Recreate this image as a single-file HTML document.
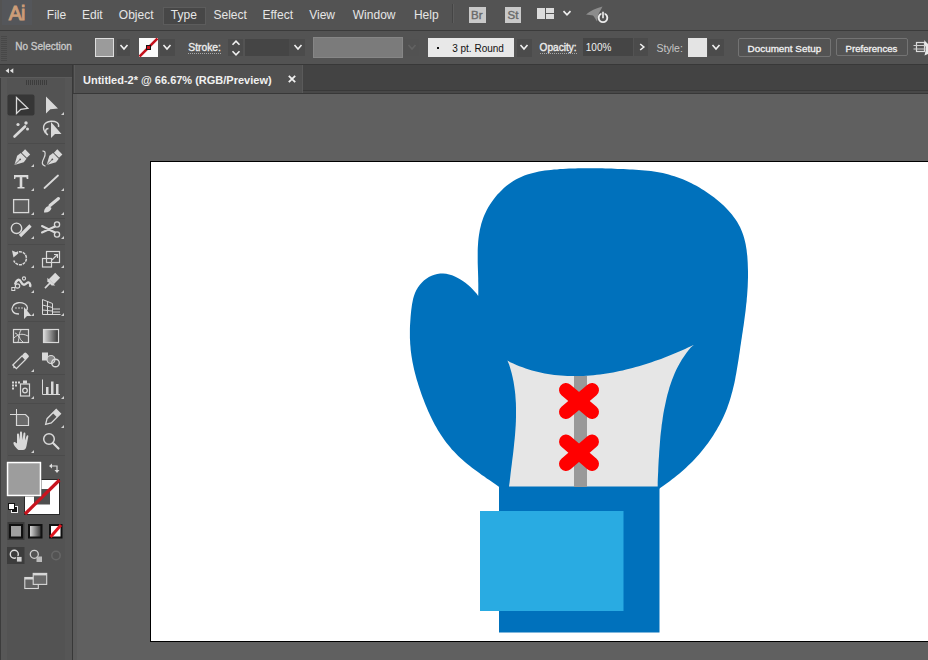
<!DOCTYPE html>
<html><head><meta charset="utf-8"><style>
html,body{margin:0;padding:0;}
body{width:928px;height:660px;overflow:hidden;position:relative;background:#535353;font-family:"Liberation Sans", sans-serif;}
.b{position:absolute;}
.t{position:absolute;white-space:pre;}
</style></head><body>
<div class="b" style="left:0px;top:0px;width:928px;height:30px;background:#535353;"></div><div class="b" style="left:0px;top:30px;width:928px;height:1px;background:#3b3b3b;"></div><div class="b" style="left:2px;top:0px;width:30px;height:25px;background:#54565a;"></div><div class="t" style="left:8.8px;top:4.29px;font-size:19.5px;line-height:19.5px;height:19.5px;color:#cc9d78;font-weight:400;letter-spacing:-0.8px;-webkit-text-stroke:0.9px #cc9d78;">Ai</div><div class="b" style="left:163px;top:7px;width:43px;height:17.5px;background:#474747;border:1px solid #5c5c5c;box-sizing:border-box;"></div><div class="t" style="left:46.800000000000004px;top:8.84px;font-size:12px;line-height:12px;height:12px;color:#e6e6e6;font-weight:400;">File</div><div class="t" style="left:82.0px;top:8.84px;font-size:12px;line-height:12px;height:12px;color:#e6e6e6;font-weight:400;">Edit</div><div class="t" style="left:118.8px;top:8.84px;font-size:12px;line-height:12px;height:12px;color:#e6e6e6;font-weight:400;">Object</div><div class="t" style="left:170.79999999999998px;top:8.84px;font-size:12px;line-height:12px;height:12px;color:#e6e6e6;font-weight:400;">Type</div><div class="t" style="left:213.5px;top:8.84px;font-size:12px;line-height:12px;height:12px;color:#e6e6e6;font-weight:400;">Select</div><div class="t" style="left:262.5px;top:8.84px;font-size:12px;line-height:12px;height:12px;color:#e6e6e6;font-weight:400;">Effect</div><div class="t" style="left:309.2px;top:8.84px;font-size:12px;line-height:12px;height:12px;color:#e6e6e6;font-weight:400;">View</div><div class="t" style="left:352.8px;top:8.84px;font-size:12px;line-height:12px;height:12px;color:#e6e6e6;font-weight:400;">Window</div><div class="t" style="left:413.9px;top:8.84px;font-size:12px;line-height:12px;height:12px;color:#e6e6e6;font-weight:400;">Help</div><div class="b" style="left:452px;top:4px;width:1px;height:19px;background:#454545;"></div><div class="b" style="left:453px;top:4px;width:1px;height:19px;background:#5d5d5d;"></div><div class="b" style="left:468.5px;top:7px;width:17px;height:16px;background:#c9c9c9;"></div><div class="t" style="left:471px;top:10.07px;font-size:11.5px;line-height:11.5px;height:11.5px;color:#6a6a6a;font-weight:400;-webkit-text-stroke:0.4px #6a6a6a;">Br</div><div class="b" style="left:504.5px;top:7px;width:16.5px;height:16px;background:#c9c9c9;"></div><div class="t" style="left:507.5px;top:10.07px;font-size:11.5px;line-height:11.5px;height:11.5px;color:#6a6a6a;font-weight:400;-webkit-text-stroke:0.4px #6a6a6a;">St</div><div class="b" style="left:536.5px;top:8px;width:8.5px;height:11px;background:#dcdcdc;"></div><div class="b" style="left:546px;top:8px;width:8.3px;height:4.5px;background:#dcdcdc;"></div><div class="b" style="left:546px;top:13.5px;width:8.3px;height:5.5px;background:#dcdcdc;"></div><svg class="b" style="left:560.8px;top:7.199999999999999px" width="12" height="12" viewBox="-6 -6 12 12"><path d="M-3.5 -1.9 L0 1.9 L3.5 -1.9" transform="rotate(0)" fill="none" stroke="#f0f0f0" stroke-width="1.6"/></svg><svg class="b" style="left:580px;top:0px" width="32" height="30" viewBox="580 0 32 30"><path d="M586 14.5 C590 11 596 8 602.5 6.5 C601 10 599.5 12 598.5 14 L597 21.5 C595.5 19 594.5 17 593 15.5 C591 15 588 15 586 14.5 Z" fill="#8c8c8c"/><circle cx="603" cy="17.8" r="4.3" fill="none" stroke="#ececec" stroke-width="1.9"/><line x1="603" y1="11.3" x2="603" y2="18.3" stroke="#535353" stroke-width="3.2"/><line x1="603" y1="11.8" x2="603" y2="18.3" stroke="#f0f0f0" stroke-width="1.6"/></svg><div class="b" style="left:0px;top:31px;width:928px;height:33px;background:#535353;"></div><div class="b" style="left:0px;top:64px;width:928px;height:1px;background:#383838;"></div><div class="b" style="left:1px;top:36px;width:6px;height:1px;background:#484848;"></div><div class="b" style="left:1px;top:38px;width:6px;height:1px;background:#484848;"></div><div class="b" style="left:1px;top:40px;width:6px;height:1px;background:#484848;"></div><div class="b" style="left:1px;top:42px;width:6px;height:1px;background:#484848;"></div><div class="b" style="left:1px;top:44px;width:6px;height:1px;background:#484848;"></div><div class="b" style="left:1px;top:46px;width:6px;height:1px;background:#484848;"></div><div class="b" style="left:1px;top:48px;width:6px;height:1px;background:#484848;"></div><div class="b" style="left:1px;top:50px;width:6px;height:1px;background:#484848;"></div><div class="b" style="left:1px;top:52px;width:6px;height:1px;background:#484848;"></div><div class="b" style="left:1px;top:54px;width:6px;height:1px;background:#484848;"></div><div class="b" style="left:1px;top:56px;width:6px;height:1px;background:#484848;"></div><div class="b" style="left:1px;top:58px;width:6px;height:1px;background:#484848;"></div><div class="b" style="left:1px;top:60px;width:6px;height:1px;background:#484848;"></div><div class="t" style="left:15.2px;top:42.03px;font-size:10px;line-height:10px;height:10px;color:#cacaca;font-weight:400;-webkit-text-stroke:0.3px #cacaca;">No Selection</div><div class="b" style="left:95px;top:38px;width:19px;height:19px;background:#9b9b9b;border:1px solid #dedede;box-sizing:border-box;"></div><div class="b" style="left:117px;top:39px;width:13px;height:17px;background:#4b4b4b;"></div><svg class="b" style="left:117.5px;top:40.5px" width="12" height="12" viewBox="-6 -6 12 12"><path d="M-3.5 -2.0 L0 2.0 L3.5 -2.0" transform="rotate(0)" fill="none" stroke="#f0f0f0" stroke-width="1.6"/></svg><svg class="b" style="left:139px;top:38px" width="19" height="19" viewBox="0 0 19 19"><rect width="19" height="19" fill="#fafafa"/><line x1="0.5" y1="18.5" x2="18.5" y2="0.5" stroke="#c4111c" stroke-width="2.6"/><rect x="7.5" y="7.5" width="4" height="4" fill="#d0101a" stroke="#111" stroke-width="1"/></svg><div class="b" style="left:160px;top:39px;width:15px;height:17px;background:#4b4b4b;"></div><svg class="b" style="left:161.3px;top:40.5px" width="12" height="12" viewBox="-6 -6 12 12"><path d="M-3.5 -2.0 L0 2.0 L3.5 -2.0" transform="rotate(0)" fill="none" stroke="#f0f0f0" stroke-width="1.6"/></svg><div class="t" style="left:188.3px;top:42.78px;font-size:10.3px;line-height:10.3px;height:10.3px;color:#ececec;font-weight:400;-webkit-text-stroke:0.35px #ececec;">Stroke:</div><div class="b" style="left:188px;top:53px;width:33px;height:1px;background:transparent;border-top:1px dotted #a8a8a8;box-sizing:border-box;"></div><div class="b" style="left:228px;top:39px;width:15px;height:17px;background:#4b4b4b;"></div><svg class="b" style="left:229.5px;top:36.8px" width="12" height="12" viewBox="-6 -6 12 12"><path d="M-3.5 -1.75 L0 1.75 L3.5 -1.75" transform="rotate(180)" fill="none" stroke="#f0f0f0" stroke-width="1.6"/></svg><svg class="b" style="left:229.5px;top:46.6px" width="12" height="12" viewBox="-6 -6 12 12"><path d="M-3.5 -1.75 L0 1.75 L3.5 -1.75" transform="rotate(0)" fill="none" stroke="#f0f0f0" stroke-width="1.6"/></svg><div class="b" style="left:245px;top:39px;width:44px;height:17px;background:#454545;"></div><div class="b" style="left:289px;top:39px;width:16px;height:17px;background:#4b4b4b;"></div><svg class="b" style="left:291.6px;top:40.8px" width="12" height="12" viewBox="-6 -6 12 12"><path d="M-3.5 -2.0 L0 2.0 L3.5 -2.0" transform="rotate(0)" fill="none" stroke="#f0f0f0" stroke-width="1.6"/></svg><div class="b" style="left:313px;top:37px;width:90px;height:21px;background:#7b7b7b;border:1px solid #868686;box-sizing:border-box;"></div><div class="b" style="left:404px;top:39px;width:15px;height:17px;background:#525252;"></div><svg class="b" style="left:405.5px;top:40.8px" width="12" height="12" viewBox="-6 -6 12 12"><path d="M-3.5 -2.0 L0 2.0 L3.5 -2.0" transform="rotate(0)" fill="none" stroke="#626262" stroke-width="1.6"/></svg><div class="b" style="left:428px;top:38px;width:86px;height:19px;background:#e8e8e8;"></div><div class="b" style="left:437px;top:47px;width:2px;height:2px;background:#111;"></div><div class="t" style="left:452.2px;top:43.53px;font-size:10px;line-height:10px;height:10px;color:#111;font-weight:400;">3 pt. Round</div><div class="b" style="left:517px;top:39px;width:15px;height:18px;background:#4b4b4b;"></div><svg class="b" style="left:518px;top:40.8px" width="12" height="12" viewBox="-6 -6 12 12"><path d="M-3.5 -2.0 L0 2.0 L3.5 -2.0" transform="rotate(0)" fill="none" stroke="#f0f0f0" stroke-width="1.6"/></svg><div class="t" style="left:539.6px;top:42.95px;font-size:10.1px;line-height:10.1px;height:10.1px;color:#ececec;font-weight:400;-webkit-text-stroke:0.35px #ececec;">Opacity:</div><div class="b" style="left:540px;top:53px;width:37px;height:1px;background:transparent;border-top:1px dotted #a8a8a8;box-sizing:border-box;"></div><div class="b" style="left:583px;top:38px;width:50px;height:18px;background:#454545;"></div><div class="t" style="left:585.8px;top:42.53px;font-size:10px;line-height:10px;height:10px;color:#f0f0f0;font-weight:400;">100%</div><div class="b" style="left:634px;top:38px;width:14px;height:18px;background:#4b4b4b;"></div><svg class="b" style="left:635.6px;top:40.5px" width="12" height="12" viewBox="-6 -6 12 12"><path d="M-3.0 -1.8 L0 1.8 L3.0 -1.8" transform="rotate(-90)" fill="none" stroke="#f0f0f0" stroke-width="1.6"/></svg><div class="t" style="left:656.6px;top:43.11px;font-size:10.5px;line-height:10.5px;height:10.5px;color:#c6c6c6;font-weight:400;">Style:</div><div class="b" style="left:688px;top:38px;width:19px;height:19px;background:#e4e4e4;"></div><div class="b" style="left:708px;top:39px;width:16px;height:17px;background:#4b4b4b;"></div><svg class="b" style="left:710px;top:40.8px" width="12" height="12" viewBox="-6 -6 12 12"><path d="M-3.5 -2.0 L0 2.0 L3.5 -2.0" transform="rotate(0)" fill="none" stroke="#f0f0f0" stroke-width="1.6"/></svg><div class="b" style="left:738px;top:38px;width:93px;height:19px;background:#535353;border:1px solid #737373;border-radius:2px;box-sizing:border-box;"></div><div class="t" style="left:747.6px;top:43.62px;font-size:9.9px;line-height:9.9px;height:9.9px;color:#f2f2f2;font-weight:400;-webkit-text-stroke:0.3px #f2f2f2;">Document Setup</div><div class="b" style="left:836px;top:38px;width:72px;height:18px;background:#535353;border:1px solid #737373;border-radius:2px;box-sizing:border-box;"></div><div class="t" style="left:845.6px;top:43.67px;font-size:9.6px;line-height:9.6px;height:9.6px;color:#f2f2f2;font-weight:400;-webkit-text-stroke:0.3px #f2f2f2;">Preferences</div><svg class="b" style="left:910px;top:36px" width="18" height="24" viewBox="910 36 18 24"><rect x="916.5" y="42.5" width="8" height="9" fill="none" stroke="#dcdcdc" stroke-width="1.2"/><path d="M913.5 45.5 H928 M913.5 49 H928" stroke="#cfcfcf" stroke-width="1"/><path d="M924 40 L928 44 V54 L924.5 55.5 L926 49 Z" fill="#e8e8e8"/></svg><div class="b" style="left:0px;top:65px;width:72px;height:595px;background:#535353;"></div><div class="b" style="left:0px;top:65px;width:1px;height:595px;background:#3c3c3c;"></div><div class="b" style="left:1px;top:78px;width:6px;height:582px;background:#575757;"></div><div class="b" style="left:65px;top:78px;width:7px;height:582px;background:#565656;"></div><div class="b" style="left:0px;top:65px;width:72px;height:12px;background:#444444;"></div><div class="b" style="left:0px;top:77px;width:72px;height:1px;background:#5c5c5c;"></div><div class="b" style="left:72px;top:65px;width:1px;height:595px;background:#383838;"></div><svg class="b" style="left:0;top:0" width="80" height="660" viewBox="0 0 80 660">
<g fill="#e0e0e0"><path d="M5.5 70.8 L9 68.3 V73.3 Z M9.8 70.8 L13.3 68.3 V73.3 Z"/></g>
<g stroke="#3c3c3c" stroke-width="1"><line x1="26.5" y1="80" x2="26.5" y2="85"/><line x1="28.5" y1="80" x2="28.5" y2="85"/><line x1="30.5" y1="80" x2="30.5" y2="85"/><line x1="32.5" y1="80" x2="32.5" y2="85"/><line x1="34.5" y1="80" x2="34.5" y2="85"/><line x1="36.5" y1="80" x2="36.5" y2="85"/><line x1="38.5" y1="80" x2="38.5" y2="85"/><line x1="40.5" y1="80" x2="40.5" y2="85"/><line x1="42.5" y1="80" x2="42.5" y2="85"/><line x1="44.5" y1="80" x2="44.5" y2="85"/><line x1="46.5" y1="80" x2="46.5" y2="85"/></g>
<rect x="7.5" y="94.5" width="27" height="21" rx="2" fill="#363636"/>
<path d="M16.5 97.5 L16.5 113.5 L20.8 109.3 L27.8 108.4 Z" fill="none" stroke="#d9d9d9" stroke-width="1.3" stroke-linejoin="miter"/>
<path d="M46 96.5 L46 113.5 L50.3 109.2 L58 108.6 Z" fill="#d9d9d9"/>
<!-- magic wand -->
<line x1="14.5" y1="136.5" x2="25" y2="126.5" stroke="#d9d9d9" stroke-width="2.6" stroke-linecap="round"/>
<g fill="#d9d9d9"><circle cx="18" cy="124.5" r="1.6"/><circle cx="26" cy="123" r="1.7"/><circle cx="27.5" cy="129" r="1.5"/></g>
<!-- lasso -->
<path d="M45.5 133 C42 128 43 122 51 121.2 C56 121 59.5 123 58.5 127" fill="none" stroke="#d9d9d9" stroke-width="1.4"/>
<path d="M48 135 C44.5 133 45 128.5 48.5 128.5" fill="none" stroke="#d9d9d9" stroke-width="1.4"/>
<path d="M51 122 L51 138 L55 134 L61.5 134 Z" fill="#d9d9d9"/>
<!-- pen -->
<g transform="translate(21.1,158.4) rotate(45) scale(0.9)">
<path d="M-4.5 -4 H4.5 L5.2 1 L0 10.5 L-5.2 1 Z" fill="#d9d9d9"/>
<rect x="-4" y="-10.3" width="8" height="5.3" fill="#d9d9d9"/>
<line x1="0" y1="2" x2="0" y2="10" stroke="#555" stroke-width="0.9"/><circle cx="0" cy="1.5" r="1" fill="#555"/>
</g>
<g transform="translate(53.3,158.4) rotate(45) scale(0.9)">
<path d="M-4.5 -4 H4.5 L5.2 1 L0 10.5 L-5.2 1 Z" fill="#d9d9d9"/>
<rect x="-4" y="-10.3" width="8" height="5.3" fill="#d9d9d9"/>
<line x1="0" y1="2" x2="0" y2="10" stroke="#555" stroke-width="0.9"/><circle cx="0" cy="1.5" r="1" fill="#555"/>
</g>
<path d="M42.5 151.2 C46 150.5 45.5 155 44 158 C42 162 41 164.5 45.5 166.3" fill="none" stroke="#d9d9d9" stroke-width="1.2"/>
<!-- type -->
<path d="M14 175 H28.3 V179 H26.8 L26.3 177.3 H22.3 V187 H24.5 V188.6 H17.5 V187 H19.7 V177.3 H15.7 L15.2 179 H14 Z" fill="#d9d9d9"/>
<line x1="44.5" y1="188" x2="58" y2="175.5" stroke="#d9d9d9" stroke-width="1.8" stroke-linecap="round"/>
<!-- rect -->
<rect x="13.6" y="199.6" width="15" height="13" fill="#5f5f5f" stroke="#d9d9d9" stroke-width="1.3"/>
<!-- brush -->
<line x1="50" y1="205.5" x2="58.5" y2="198.5" stroke="#d9d9d9" stroke-width="3" stroke-linecap="round"/>
<path d="M44 212.5 C44 209 46 206.5 49 206 L51.5 208 C51 211 48 213 44 212.5 Z" fill="#d9d9d9"/>
<!-- shaper -->
<circle cx="16.5" cy="228.3" r="5.2" fill="none" stroke="#d9d9d9" stroke-width="1.4"/>
<line x1="20" y1="236" x2="30.5" y2="225.5" stroke="#d9d9d9" stroke-width="3.2"/>
<!-- scissors -->
<circle cx="57" cy="224.5" r="2.6" fill="none" stroke="#d9d9d9" stroke-width="1.3"/>
<circle cx="57" cy="234.5" r="2.6" fill="none" stroke="#d9d9d9" stroke-width="1.3"/>
<path d="M42 226 L55 232.5 M42 232.5 L55 226.5" stroke="#d9d9d9" stroke-width="2" stroke-linecap="round"/>
<!-- rotate -->
<path d="M15.5 253.5 A6.5 6.5 0 1 1 13.8 260.5" fill="none" stroke="#d9d9d9" stroke-width="1.5" stroke-dasharray="3 0.8"/>
<path d="M12 250.5 L18.5 253.3 L13.5 257.5 Z" fill="#d9d9d9"/>
<!-- scale -->
<rect x="46.5" y="251.5" width="13" height="11" fill="none" stroke="#d9d9d9" stroke-width="1.2"/>
<rect x="42.5" y="258.5" width="9" height="8.5" fill="none" stroke="#d9d9d9" stroke-width="1.2"/>
<path d="M52 260 L57 255 M54 254.5 H57.5 V258" fill="none" stroke="#d9d9d9" stroke-width="1.2"/>
<!-- width/puppet -->
<path d="M15 284.5 C16 280 19 278 21 282 C23 286 25 285 27 283 C29 281 31 284 30 287" fill="none" stroke="#d9d9d9" stroke-width="2.4"/>
<circle cx="17.5" cy="286" r="2.2" fill="none" stroke="#d9d9d9" stroke-width="1.2"/>
<circle cx="24" cy="278.5" r="1.6" fill="none" stroke="#d9d9d9" stroke-width="1.1"/>
<rect x="11.8" y="287.5" width="3" height="3" fill="none" stroke="#d9d9d9" stroke-width="1"/>
<!-- pin -->
<g transform="translate(52,281) rotate(45)"><rect x="-3.5" y="-8" width="7" height="9" fill="#d9d9d9"/><path d="M-5.5 1 H5.5 L3 3.5 H-3 Z" fill="#d9d9d9"/><line x1="0" y1="3" x2="0" y2="10" stroke="#d9d9d9" stroke-width="1.6"/></g>
<!-- shape builder -->
<path d="M19 314 C12 314 11 309 13 306 C15 302 21 302 25 304 C28 306 28 309 26 311" fill="none" stroke="#d9d9d9" stroke-width="1.3"/>
<g fill="#d9d9d9"><circle cx="16" cy="308" r="0.8"/><circle cx="19" cy="308" r="0.8"/><circle cx="22" cy="308" r="0.8"/></g>
<path d="M24 307 L24 319 L27 316 L31.5 316 Z" fill="#d9d9d9"/>
<!-- perspective grid -->
<g stroke="#d9d9d9" stroke-width="1" fill="none">
<path d="M42.5 299.5 V314.5 H60.5"/><path d="M42.5 299.5 L52.5 303.5 V314.5"/><path d="M47.5 301.5 V314.5"/>
<path d="M42.5 305 L52.5 307.5 M42.5 310 L52.5 311"/><path d="M52.5 309 H60 M52.5 312 H60"/>
</g>
<!-- mesh -->
<rect x="13.5" y="329.5" width="15" height="13" fill="#5a5a5a" stroke="#d9d9d9" stroke-width="1.2"/>
<path d="M14 338 C18 334 22 333 28 336 M21 330 C18 335 19 339 23 342 M15 333 C18 334 20 337 18 342" fill="none" stroke="#d9d9d9" stroke-width="1"/>
<!-- gradient -->
<defs><linearGradient id="gr1" x1="0" x2="1"><stop offset="0" stop-color="#dcdcdc"/><stop offset="1" stop-color="#333"/></linearGradient>
<linearGradient id="gr2" x1="0" x2="1"><stop offset="0" stop-color="#e8e8e8"/><stop offset="1" stop-color="#2b2b2b"/></linearGradient></defs>
<rect x="43.5" y="329.5" width="15" height="13" fill="url(#gr1)" stroke="#d9d9d9" stroke-width="1.2"/>
<!-- eyedropper -->
<g transform="translate(21,360.5) rotate(45)"><rect x="-2.5" y="-4" width="5" height="13" fill="none" stroke="#d9d9d9" stroke-width="1.3"/><rect x="-3" y="-9" width="6" height="5" rx="1.5" fill="#d9d9d9"/><path d="M-1.5 9 L0 11 L1.5 9" fill="#d9d9d9"/></g>
<!-- blend -->
<rect x="42" y="352.5" width="6" height="8" fill="#d9d9d9"/>
<circle cx="51" cy="359.5" r="4" fill="#888" stroke="#d9d9d9" stroke-width="1.2"/>
<circle cx="55.5" cy="363" r="3.8" fill="none" stroke="#d9d9d9" stroke-width="1.4"/>
<!-- symbol sprayer -->
<g fill="#d9d9d9"><rect x="12" y="381.5" width="2" height="2"/><rect x="15" y="381.5" width="2" height="2"/><rect x="18" y="381.5" width="2" height="2"/><rect x="12" y="384.5" width="2" height="2"/><rect x="15" y="384.5" width="2" height="2"/><rect x="12" y="387.5" width="2" height="2"/><rect x="23" y="380.5" width="4" height="3"/></g>
<rect x="20.5" y="384" width="9" height="12" fill="none" stroke="#d9d9d9" stroke-width="1.2"/>
<circle cx="25" cy="390.5" r="2.3" fill="none" stroke="#d9d9d9" stroke-width="1.3"/>
<!-- graph -->
<path d="M42.5 379.5 V394.5 H60" fill="none" stroke="#d9d9d9" stroke-width="1"/>
<g fill="#d9d9d9"><rect x="46" y="387" width="2.5" height="7.5"/><rect x="51" y="381.5" width="2.5" height="13"/><rect x="56" y="384" width="2.5" height="10.5"/></g>
<!-- artboard -->
<path d="M10 414.5 H16.5 M16.5 409 V414.5" stroke="#d9d9d9" stroke-width="1"/>
<path d="M16.5 414.5 H25.5 L28.5 417.5 V425.5 H16.5 Z" fill="#6a6a6a" stroke="#d9d9d9" stroke-width="1.2"/>
<!-- eraser -->
<g transform="translate(52,418) rotate(45)"><path d="M-3 -9 H3 V4 L0 9 L-3 4 Z" fill="none" stroke="#d9d9d9" stroke-width="1.3"/><rect x="-3" y="-9" width="6" height="5" fill="#d9d9d9"/></g>
<!-- hand -->
<path d="M18.5 450 C15 447 13 444 13.5 442.5 C14 441.5 15.5 442 17 443.5 L17 434.5 C17 433 19 433 19 434.5 L19.5 440 L20 432.5 C20 431 22 431 22 432.5 L22.5 440 L23.5 433.5 C23.7 432 25.5 432.3 25.4 433.8 L25 440.5 L26.6 436 C27 434.7 28.6 435.2 28.3 436.5 L26.5 446 C26 448.5 25 450 23 450 Z" fill="#d9d9d9"/>
<!-- zoom -->
<circle cx="49" cy="439" r="5.3" fill="none" stroke="#d9d9d9" stroke-width="1.5"/>
<line x1="53" y1="443" x2="58.5" y2="448.5" stroke="#d9d9d9" stroke-width="2.2" stroke-linecap="round"/>
<!-- flyout triangles -->
<g fill="#cfcfcf"><path d="M64 112 V115 H61 Z"/><path d="M34 164 V167 H31 Z"/><path d="M34 188 V191 H31 Z"/><path d="M64 188 V191 H61 Z"/><path d="M34 212 V215 H31 Z"/><path d="M64 212 V215 H61 Z"/><path d="M34 236 V239 H31 Z"/><path d="M64 236 V239 H61 Z"/><path d="M34 265 V268 H31 Z"/><path d="M64 265 V268 H61 Z"/><path d="M34 290 V293 H31 Z"/><path d="M64 290 V293 H61 Z"/><path d="M34 313 V316 H31 Z"/><path d="M64 313 V316 H61 Z"/><path d="M34 369 V372 H31 Z"/><path d="M34 396 V399 H31 Z"/><path d="M64 396 V399 H61 Z"/><path d="M64 425 V428 H61 Z"/><path d="M34 450 V453 H31 Z"/></g>
<!-- stroke swatch -->
<rect x="24.5" y="479.5" width="35" height="35" fill="#fff" stroke="#2a2a2a" stroke-width="1"/>
<rect x="34" y="489" width="16" height="15.5" fill="#4e4e4e"/>
<line x1="25" y1="514" x2="59.5" y2="480" stroke="#c8141e" stroke-width="3.2"/>
<!-- fill swatch -->
<rect x="6.5" y="461.5" width="35" height="35" fill="#2a2a2a"/>
<rect x="7.5" y="462.5" width="33" height="33" fill="#9d9d9d" stroke="#fff" stroke-width="1.6"/>
<!-- swap -->
<path d="M51 466 H57 V471" fill="none" stroke="#ddd" stroke-width="1.2"/>
<path d="M49 466 L52 463.5 V468.5 Z M57 473 L54.5 470 H59.5 Z" fill="#ddd"/>
<!-- default -->
<rect x="11.5" y="506.5" width="6" height="6" fill="#111" stroke="#eee" stroke-width="1"/>
<rect x="8.5" y="503.5" width="6" height="6" fill="#fff" stroke="#111" stroke-width="1"/>
<!-- color modes -->
<rect x="7.5" y="522" width="17" height="18" fill="#3a3a3a"/>
<rect x="10" y="525" width="12" height="12.5" fill="#a0a0a0" stroke="#111" stroke-width="2"/>
<rect x="29" y="525" width="12.5" height="12.5" fill="url(#gr2)" stroke="#111" stroke-width="2"/>
<rect x="50" y="525" width="11.5" height="12.5" fill="#fff" stroke="#111" stroke-width="2"/>
<line x1="50.5" y1="537" x2="61" y2="525" stroke="#e0141e" stroke-width="3"/>
<!-- draw modes -->
<rect x="7" y="547" width="17.5" height="17" fill="#3c3c3c"/>
<circle cx="14.3" cy="554.3" r="4" fill="none" stroke="#e0e0e0" stroke-width="1.4"/>
<rect x="16.5" y="556.5" width="5.5" height="5.5" fill="#d0d0d0" stroke="#3c3c3c" stroke-width="0.8"/>
<circle cx="34.3" cy="554.3" r="4" fill="none" stroke="#cfcfcf" stroke-width="1.3"/>
<rect x="36.5" y="556.5" width="5.5" height="5.5" fill="#bbb"/>
<circle cx="56" cy="555.5" r="4.2" fill="none" stroke="#676767" stroke-width="1.5"/>
<!-- screen mode -->
<rect x="24.8" y="577.5" width="13.5" height="11" fill="#626262" stroke="#d8d8d8" stroke-width="1.1"/>
<rect x="24.8" y="577.5" width="13.5" height="2" fill="#d8d8d8"/>
<rect x="33.2" y="573.4" width="13.5" height="11" fill="#6a6a6a" stroke="#d8d8d8" stroke-width="1.1"/>
<rect x="33.2" y="573.4" width="13.5" height="2" fill="#d8d8d8"/>
</svg><div class="b" style="left:8px;top:143px;width:57px;height:1px;background:#4b4b4b;"></div><div class="b" style="left:8px;top:218px;width:57px;height:1px;background:#4b4b4b;"></div><div class="b" style="left:8px;top:244px;width:57px;height:1px;background:#4b4b4b;"></div><div class="b" style="left:8px;top:321px;width:57px;height:1px;background:#4b4b4b;"></div><div class="b" style="left:8px;top:374px;width:57px;height:1px;background:#4b4b4b;"></div><div class="b" style="left:8px;top:403px;width:57px;height:1px;background:#4b4b4b;"></div><div class="b" style="left:8px;top:455px;width:57px;height:1px;background:#4b4b4b;"></div><div class="b" style="left:73px;top:65px;width:855px;height:29px;background:#434343;"></div><div class="b" style="left:74px;top:65px;width:229px;height:28px;background:#505050;"></div><div class="b" style="left:74px;top:65px;width:1px;height:28px;background:#5a5a5a;"></div><div class="b" style="left:302px;top:65px;width:1px;height:28px;background:#5a5a5a;"></div><div class="b" style="left:303px;top:90px;width:625px;height:1px;background:#393939;"></div><div class="b" style="left:303px;top:91px;width:625px;height:2px;background:#484848;"></div><div class="b" style="left:73px;top:93px;width:855px;height:1px;background:#383838;"></div><div class="t" style="left:83px;top:74.69px;font-size:11px;line-height:11px;height:11px;color:#f0f0f0;font-weight:700;">Untitled-2* @ 66.67% (RGB/Preview)</div><svg class="b" style="left:286px;top:73px" width="12" height="12" viewBox="0 0 12 12"><path d="M2.8 2.8 L9.2 9.2 M9.2 2.8 L2.8 9.2" stroke="#f0f0f0" stroke-width="1.8"/></svg><div class="b" style="left:73px;top:94px;width:855px;height:566px;background:#606060;"></div><div class="b" style="left:73px;top:94px;width:4px;height:566px;background:#5b5b5b;"></div><div class="b" style="left:150px;top:161px;width:778px;height:481px;background:#000;"></div><div class="b" style="left:151px;top:162px;width:777px;height:479px;background:#fff;"></div><svg class="b" style="left:0;top:0" width="928" height="660" viewBox="0 0 928 660">
<path d="M478.2 296.0 L478.3 293.0 478.3 290.0 478.3 287.0 478.3 284.0 478.2 280.9 478.2 277.9 478.1 274.9 478.0 271.8 477.9 268.8 477.8 265.7 477.7 262.6 477.7 259.6 477.7 256.5 477.7 253.5 477.7 250.5 477.8 247.4 478.0 244.4 478.2 241.4 478.5 238.4 478.9 235.5 479.4 232.5 479.9 229.6 480.6 226.7 481.3 223.8 482.2 220.9 483.2 218.1 484.3 215.3 485.6 212.5 486.9 209.8 488.4 207.1 490.0 204.5 491.7 201.9 493.5 199.4 495.4 197.0 497.4 194.6 499.5 192.4 501.7 190.2 503.9 188.1 506.2 186.1 508.6 184.2 511.1 182.5 513.7 180.8 516.3 179.3 518.9 177.9 521.7 176.7 524.4 175.6 527.3 174.6 530.1 173.7 533.0 172.9 536.0 172.2 538.9 171.6 541.9 171.1 544.9 170.6 547.9 170.3 550.9 169.9 554.0 169.6 557.0 169.4 560.0 169.1 563.0 168.9 566.1 168.7 569.1 168.6 572.1 168.5 575.1 168.4 578.1 168.3 581.2 168.2 584.2 168.2 587.2 168.2 590.2 168.2 593.2 168.2 596.2 168.2 599.3 168.3 602.3 168.3 605.3 168.4 608.3 168.5 611.4 168.6 614.4 168.7 617.4 168.9 620.5 169.0 623.5 169.1 626.5 169.3 629.6 169.4 632.6 169.6 635.7 169.8 638.7 170.0 641.8 170.2 644.8 170.5 647.9 170.8 650.9 171.1 653.9 171.5 656.9 172.0 659.8 172.5 662.8 173.1 665.7 173.8 668.6 174.6 671.5 175.4 674.4 176.3 677.2 177.2 680.0 178.3 682.8 179.3 685.6 180.5 688.3 181.7 691.0 183.0 693.7 184.4 696.4 185.8 699.0 187.3 701.6 188.9 704.2 190.5 706.7 192.2 709.2 193.9 711.7 195.7 714.2 197.6 716.6 199.5 719.0 201.4 721.3 203.5 723.6 205.6 725.8 207.7 727.9 209.9 729.9 212.2 731.9 214.5 733.7 216.9 735.4 219.3 737.1 221.8 738.6 224.4 740.0 227.1 741.2 229.8 742.3 232.5 743.3 235.3 744.2 238.2 744.9 241.1 745.6 244.1 746.1 247.1 746.6 250.1 746.9 253.1 747.3 256.1 747.5 259.2 747.7 262.2 747.8 265.2 747.9 268.3 748.0 271.3 748.0 274.3 748.0 277.3 747.9 280.4 747.8 283.4 747.7 286.4 747.5 289.4 747.3 292.4 747.1 295.4 746.8 298.4 746.6 301.4 746.2 304.5 745.9 307.5 745.6 310.5 745.2 313.5 744.8 316.5 744.4 319.5 744.0 322.5 743.6 325.5 743.1 328.5 742.7 331.5 742.2 334.5 741.8 337.5 741.3 340.5 740.9 343.5 740.4 346.5 740.0 349.5 739.6 352.5 739.1 355.5 738.7 358.5 738.2 361.6 737.7 364.6 737.2 367.5 736.7 370.5 736.2 373.5 735.6 376.5 735.1 379.5 734.5 382.4 733.8 385.4 733.1 388.3 732.4 391.2 731.6 394.1 730.8 397.0 729.9 399.9 729.0 402.8 728.0 405.6 727.0 408.4 725.9 411.2 724.7 414.0 723.5 416.8 722.2 419.5 720.8 422.2 719.4 424.9 717.9 427.5 716.4 430.2 714.8 432.8 713.2 435.4 711.5 437.9 709.8 440.4 708.1 442.9 706.3 445.3 704.4 447.8 702.6 450.1 700.6 452.4 698.7 454.7 696.6 457.0 694.6 459.2 692.5 461.4 690.4 463.5 688.2 465.6 686.0 467.7 683.8 469.7 681.5 471.7 679.2 473.7 676.9 475.6 674.5 477.5 672.1 479.3 669.7 481.2 667.2 483.0 664.8 484.7 662.3 486.4 659.8 488.2 L659 489 L659 487 L499.2 487 L499.2 487.0 496.8 485.2 494.3 483.5 491.8 481.8 489.3 480.1 486.8 478.4 484.3 476.6 481.8 474.9 479.3 473.1 476.9 471.3 474.4 469.5 472.0 467.7 469.6 465.8 467.3 463.9 464.9 461.9 462.7 459.9 460.4 457.9 458.2 455.9 456.1 453.8 454.0 451.6 451.9 449.4 450.0 447.1 448.1 444.8 446.2 442.5 444.4 440.0 442.7 437.6 441.0 435.1 439.4 432.5 437.8 429.9 436.3 427.3 434.8 424.7 433.4 422.0 432.0 419.3 430.7 416.5 429.4 413.7 428.1 410.9 426.9 408.1 425.7 405.3 424.6 402.5 423.5 399.6 422.4 396.7 421.4 393.9 420.4 391.0 419.4 388.1 418.5 385.2 417.6 382.3 416.7 379.4 415.9 376.5 415.1 373.6 414.4 370.7 413.7 367.8 413.1 364.8 412.5 361.9 412.0 358.9 411.5 356.0 411.1 353.0 410.7 350.0 410.5 347.0 410.2 344.0 410.1 341.0 409.9 338.0 409.9 334.9 409.9 331.9 409.9 328.9 410.0 325.8 410.2 322.8 410.4 319.7 410.6 316.7 410.9 313.6 411.2 310.5 411.6 307.5 412.0 304.4 412.6 301.4 413.2 298.4 414.1 295.5 415.1 292.7 416.4 290.0 417.9 287.4 419.7 285.0 421.7 282.7 423.9 280.6 426.3 278.7 428.9 277.1 431.6 275.7 434.4 274.7 437.2 273.9 440.2 273.5 443.1 273.5 446.1 273.8 449.1 274.4 452.0 275.3 454.9 276.5 457.8 277.9 460.5 279.5 463.2 281.2 465.7 283.0 468.1 285.0 470.4 287.1 472.6 289.2 474.6 291.4 476.5 293.6 478.2 296.0 Z" fill="#0071bc"/>
<path d="M507.4 360.5 509.1 364.6 510.4 368.8 511.6 373.1 512.6 377.3 513.5 381.6 514.2 385.9 514.8 390.3 515.3 394.6 515.6 398.9 515.9 403.3 516.0 407.7 516.0 412.1 516.0 416.5 515.9 420.9 515.7 425.3 515.4 429.7 515.1 434.1 514.7 438.5 514.2 442.9 513.8 447.3 513.3 451.7 512.8 456.1 512.2 460.4 511.7 464.8 511.1 469.2 510.6 473.5 510.1 477.9 509.6 482.2 509.0 486.5 L657.7 486.5 657.7 482.6 657.8 478.9 658.0 475.1 658.2 471.3 658.3 467.5 658.5 463.6 658.7 459.8 659.0 455.9 659.2 452.1 659.5 448.2 659.8 444.4 660.1 440.5 660.4 436.6 660.8 432.8 661.3 428.9 661.7 425.1 662.3 421.2 662.8 417.4 663.4 413.6 664.1 409.8 664.9 406.0 665.7 402.2 666.5 398.4 667.4 394.7 668.5 391.0 669.5 387.3 670.7 383.7 672.0 380.1 673.4 376.6 674.8 373.1 676.4 369.6 678.1 366.2 679.9 362.9 681.9 359.6 684.0 356.4 686.2 353.3 688.5 350.3 691.0 347.3 694.0 344.7 L690.9 346.2 688.0 347.6 685.1 348.9 682.2 350.2 679.2 351.5 676.2 352.8 673.2 354.1 670.2 355.3 667.1 356.5 664.0 357.7 661.0 358.9 657.9 360.0 654.7 361.1 651.6 362.2 648.5 363.2 645.3 364.3 642.1 365.2 638.9 366.2 635.7 367.1 632.5 368.0 629.3 368.8 626.1 369.6 622.8 370.4 619.6 371.1 616.4 371.8 613.1 372.4 609.8 373.0 606.6 373.5 603.3 374.0 600.0 374.5 596.8 374.8 593.5 375.2 590.2 375.5 586.9 375.7 583.7 375.9 580.4 376.0 577.1 376.1 573.8 376.1 570.6 376.0 567.3 375.9 564.1 375.8 560.8 375.5 557.6 375.2 554.3 374.9 551.1 374.4 547.9 373.9 544.7 373.4 541.5 372.7 538.3 372.0 535.1 371.2 532.0 370.4 528.8 369.4 525.7 368.4 522.6 367.3 519.4 366.2 516.4 364.9 513.3 363.6 510.2 362.2 507.4 360.5 Z" fill="#e6e6e6"/>
<rect x="574" y="376" width="13" height="111.5" fill="#999"/>
<g stroke="#ff0000" stroke-width="14" stroke-linecap="round">
<line x1="566" y1="390" x2="592" y2="412"/><line x1="592" y1="390" x2="566" y2="412"/>
<line x1="566" y1="441.5" x2="592" y2="464"/><line x1="592" y1="441.5" x2="566" y2="464"/>
</g>
<rect x="499" y="487" width="160.5" height="145.5" fill="#0071bc"/>
<rect x="480" y="511" width="143.5" height="100" fill="#29abe2"/>
</svg>
</body></html>
